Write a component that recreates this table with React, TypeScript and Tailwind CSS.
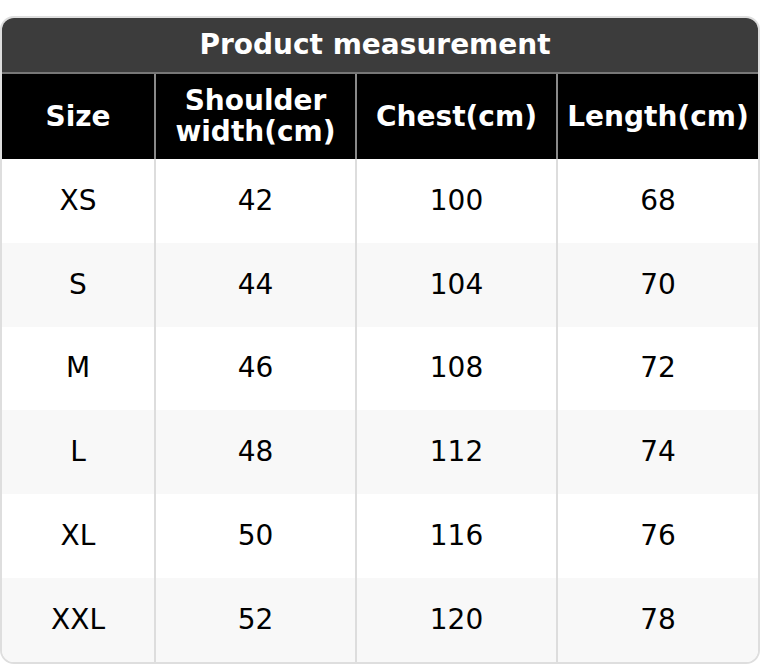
const headers = ["Size", "Shoulder width(cm)", "Chest(cm)", "Length(cm)"];

const rows = [
  ["XS", "42", "100", "68"],
  ["S", "44", "104", "70"],
  ["M", "46", "108", "72"],
  ["L", "48", "112", "74"],
  ["XL", "50", "116", "76"],
  ["XXL", "52", "120", "78"],
];

const cols = "grid grid-cols-[152px_201px_201px_1fr]";

export default function App() {
  return (
    <div className="w-[760px] h-[664px] bg-white pt-4 font-['DejaVu_Sans',sans-serif]">
      <div className="h-[648px] rounded-[14px] border-2 border-[#dedede] overflow-hidden flex flex-col">
        <div className="h-[56px] bg-[#3c3c3c] border-b-2 border-[#777] flex items-center justify-center pr-[10px] text-white font-bold text-[28px] leading-none">
          Product measurement
        </div>
        <div className={`${cols} h-[85px] bg-black text-white font-bold text-[28px] leading-[31px]`}>
          {headers.map((h, i) => (
            <div
              key={h}
              className={`flex items-center justify-center text-center ${i > 0 ? "border-l-2 border-[#8a8a8a]" : ""}`}
            >
              {h === "Shoulder width(cm)" ? (
                <span>
                  Shoulder
                  <br />
                  width(cm)
                </span>
              ) : (
                h
              )}
            </div>
          ))}
        </div>
        {rows.map((r, ri) => (
          <div
            key={r[0]}
            className={`${cols} h-[84px] text-[28px] text-black ${ri % 2 ? "bg-[#f8f8f8]" : "bg-white"}`}
          >
            {r.map((c, ci) => (
              <div
                key={ci}
                className={`flex items-center justify-center ${ci > 0 ? "border-l-2 border-[#dddddd]" : ""}`}
              >
                {c}
              </div>
            ))}
          </div>
        ))}
      </div>
    </div>
  );
}
